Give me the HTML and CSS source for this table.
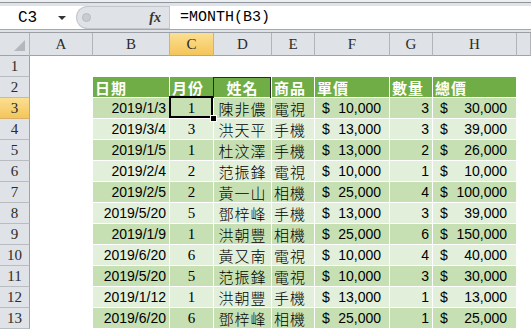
FILE: index.html
```html
<!DOCTYPE html>
<html lang="zh-Hant">
<head>
    <meta charset="UTF-8">
    <title>Sheet1</title>
    <link rel="stylesheet" href="styles.css">
</head>
<body>
    <div class="top">
        <div class="ribbon"></div>
        <div class="formula-bar">
            <div class="name-box"><span class="ref">C3</span><span class="caret"></span></div>
            <div class="fx-zone"><span class="knob"></span><span class="fx">fx</span></div>
            <div class="formula">=MONTH(B3)</div>
        </div>
        <div class="bar-gap"></div>
    </div>

    <div class="sheet">
        <!-- column headers -->
        <div class="corner"><span class="tri"></span></div>
        <div class="col-h">A</div>
        <div class="col-h">B</div>
        <div class="col-h on">C</div>
        <div class="col-h">D</div>
        <div class="col-h">E</div>
        <div class="col-h">F</div>
        <div class="col-h">G</div>
        <div class="col-h">H</div>
        <div class="col-h"></div>

        <!-- row 1 -->
        <div class="row-h">1</div>
        <div class="c"></div><div class="c"></div><div class="c"></div><div class="c"></div>
        <div class="c"></div><div class="c"></div><div class="c"></div><div class="c"></div><div class="c"></div>

        <!-- row 2 : table header -->
        <div class="row-h">2</div>
        <div class="c"></div>
        <div class="c hd">日期</div>
        <div class="c hd">月份</div>
        <div class="c hd mark">姓名</div>
        <div class="c hd">商品</div>
        <div class="c hd">單價</div>
        <div class="c hd">數量</div>
        <div class="c hd">總價</div>
        <div class="c"></div>

        <div class="row-h on">3</div>
        <div class="c"></div>
        <div class="c dk date">2019/1/3</div>
        <div class="c dk month cur">1</div>
        <div class="c dk name">陳非儂</div>
        <div class="c dk item">電視</div>
        <div class="c dk money"><span>$</span><span>10,000</span></div>
        <div class="c dk qty">3</div>
        <div class="c dk money total"><span>$</span><span>30,000</span></div>
        <div class="c"></div>

        <div class="row-h">4</div>
        <div class="c"></div>
        <div class="c lt date">2019/3/4</div>
        <div class="c lt month">3</div>
        <div class="c lt name">洪天平</div>
        <div class="c lt item">手機</div>
        <div class="c lt money"><span>$</span><span>13,000</span></div>
        <div class="c lt qty">3</div>
        <div class="c lt money total"><span>$</span><span>39,000</span></div>
        <div class="c"></div>

        <div class="row-h">5</div>
        <div class="c"></div>
        <div class="c dk date">2019/1/5</div>
        <div class="c dk month">1</div>
        <div class="c dk name">杜汶澤</div>
        <div class="c dk item">手機</div>
        <div class="c dk money"><span>$</span><span>13,000</span></div>
        <div class="c dk qty">2</div>
        <div class="c dk money total"><span>$</span><span>26,000</span></div>
        <div class="c"></div>

        <div class="row-h">6</div>
        <div class="c"></div>
        <div class="c lt date">2019/2/4</div>
        <div class="c lt month">2</div>
        <div class="c lt name">范振鋒</div>
        <div class="c lt item">電視</div>
        <div class="c lt money"><span>$</span><span>10,000</span></div>
        <div class="c lt qty">1</div>
        <div class="c lt money total"><span>$</span><span>10,000</span></div>
        <div class="c"></div>

        <div class="row-h">7</div>
        <div class="c"></div>
        <div class="c dk date">2019/2/5</div>
        <div class="c dk month">2</div>
        <div class="c dk name">黃一山</div>
        <div class="c dk item">相機</div>
        <div class="c dk money"><span>$</span><span>25,000</span></div>
        <div class="c dk qty">4</div>
        <div class="c dk money total"><span>$</span><span>100,000</span></div>
        <div class="c"></div>

        <div class="row-h">8</div>
        <div class="c"></div>
        <div class="c lt date">2019/5/20</div>
        <div class="c lt month">5</div>
        <div class="c lt name">鄧梓峰</div>
        <div class="c lt item">手機</div>
        <div class="c lt money"><span>$</span><span>13,000</span></div>
        <div class="c lt qty">3</div>
        <div class="c lt money total"><span>$</span><span>39,000</span></div>
        <div class="c"></div>

        <div class="row-h">9</div>
        <div class="c"></div>
        <div class="c dk date">2019/1/9</div>
        <div class="c dk month">1</div>
        <div class="c dk name">洪朝豐</div>
        <div class="c dk item">相機</div>
        <div class="c dk money"><span>$</span><span>25,000</span></div>
        <div class="c dk qty">6</div>
        <div class="c dk money total"><span>$</span><span>150,000</span></div>
        <div class="c"></div>

        <div class="row-h">10</div>
        <div class="c"></div>
        <div class="c lt date">2019/6/20</div>
        <div class="c lt month">6</div>
        <div class="c lt name">黃又南</div>
        <div class="c lt item">電視</div>
        <div class="c lt money"><span>$</span><span>10,000</span></div>
        <div class="c lt qty">4</div>
        <div class="c lt money total"><span>$</span><span>40,000</span></div>
        <div class="c"></div>

        <div class="row-h">11</div>
        <div class="c"></div>
        <div class="c dk date">2019/5/20</div>
        <div class="c dk month">5</div>
        <div class="c dk name">范振鋒</div>
        <div class="c dk item">電視</div>
        <div class="c dk money"><span>$</span><span>10,000</span></div>
        <div class="c dk qty">3</div>
        <div class="c dk money total"><span>$</span><span>30,000</span></div>
        <div class="c"></div>

        <div class="row-h">12</div>
        <div class="c"></div>
        <div class="c lt date">2019/1/12</div>
        <div class="c lt month">1</div>
        <div class="c lt name">洪朝豐</div>
        <div class="c lt item">手機</div>
        <div class="c lt money"><span>$</span><span>13,000</span></div>
        <div class="c lt qty">1</div>
        <div class="c lt money total"><span>$</span><span>13,000</span></div>
        <div class="c"></div>

        <div class="row-h">13</div>
        <div class="c"></div>
        <div class="c dk date">2019/6/20</div>
        <div class="c dk month">6</div>
        <div class="c dk name">鄧梓峰</div>
        <div class="c dk item">相機</div>
        <div class="c dk money"><span>$</span><span>25,000</span></div>
        <div class="c dk qty">1</div>
        <div class="c dk money total"><span>$</span><span>25,000</span></div>
        <div class="c"></div>
    </div>
</body>
</html>
```

FILE: styles.css
```css
* { box-sizing: border-box; }
body { margin: 0; background: #fff; font-family: "Liberation Sans", Arial, sans-serif; color: #000; overflow: hidden; }

/* formula bar strip */
.top { background: #dfe2e6; }
.ribbon { height: 3px; background: #eceef0; border-bottom: 1px solid #8f959c; margin-bottom: 3px; }
.formula-bar { display: flex; height: 24px; background: #fff; border-bottom: 1px solid #a3a8ae; }
.name-box { width: 76px; display: flex; align-items: center; padding-left: 18px; font-family: "Liberation Mono", monospace; font-size: 16px; }
.name-box .ref { flex: 1; }
.caret { width: 0; height: 0; border-left: 4px solid transparent; border-right: 4px solid transparent; border-top: 4px solid #333; margin-right: 10px; }
.fx-zone { width: 93px; display: flex; align-items: center; justify-content: space-between; background: #dfe2e6; border: 1px solid #c3c7cc; border-right: none; border-radius: 12px 0 0 12px; padding: 0 8px 0 5px; }
.knob { width: 9px; height: 9px; border-radius: 50%; background: #c9ccd0; border: 1px solid #b8bcc1; }
.fx { font-family: "Liberation Serif", serif; font-style: italic; font-weight: bold; font-size: 14px; color: #333; }
.formula { flex: 1; border-left: 1px solid #c3c7cc; padding-left: 10px; font-family: "Liberation Mono", monospace; font-size: 15px; line-height: 23px; }
.bar-gap { height: 3px; border-bottom: 1px solid #9aa0a6; }

/* grid */
.sheet { display: grid; grid-template-columns: 30px 63px 77px 44px 58px 43px 75px 43px 84px 1fr; grid-template-rows: 23px; grid-auto-rows: 21px; }
.corner { background: #dfe2e6; border-right: 1px solid #b1b5ba; border-bottom: 1px solid #9da3a9; display: flex; justify-content: flex-end; align-items: flex-end; padding: 0 4px 4px 0; }
.tri { width: 0; height: 0; border-left: 11px solid transparent; border-bottom: 11px solid #b4b8bd; }
.col-h { background: #dfe2e6; border-right: 1px solid #b1b5ba; border-bottom: 1px solid #9da3a9; font-family: "Liberation Serif", serif; font-size: 15px; color: #2b2b2b; text-align: center; line-height: 22px; }
.col-h.on { background: linear-gradient(#fbdf92, #f4c55a); border-bottom-color: #d9a23b; border-right-color: #d8b06a; }
.row-h { background: #dfe2e6; border-right: 1px solid #9da3a9; border-bottom: 1px solid #b9bdc2; font-family: "Liberation Serif", serif; font-size: 15px; color: #2b2b2b; text-align: center; line-height: 21px; }
.row-h.on { background: linear-gradient(#fbdf92, #f4c55a); border-right-color: #d9a23b; border-bottom-color: #d8b06a; }

/* cells */
.c { border-right: 1px solid #fff; border-bottom: 1px solid #fff; font-size: 14px; line-height: 21px; padding: 0 2px; white-space: nowrap; }
.hd { background: #70ad47; color: #fff; font-family: "Noto Sans CJK TC", sans-serif; font-weight: bold; font-size: 15px; letter-spacing: 1px; }
.hd.mark { text-align: center; position: relative; }
.hd.mark::before { content: ""; position: absolute; left: -1px; top: 0; right: 0; bottom: -1px; border: 1px solid #2a2a2a; border-bottom: none; }
.dk { background: #c6e0b4; }
.lt { background: #e2efda; }
.date { text-align: right; padding-right: 3px; }
.month { text-align: center; font-family: "Liberation Serif", serif; font-size: 15px; }
.name { text-align: center; font-family: "Noto Sans CJK TC", sans-serif; font-weight: 300; font-size: 15px; letter-spacing: 1px; }
.item { font-family: "Noto Sans CJK TC", sans-serif; font-weight: 300; font-size: 15px; letter-spacing: 1px; padding-left: 2px; }
.money { display: flex; justify-content: space-between; padding: 0 8px 0 7px; }
.money.total { padding-right: 9px; }
.qty { text-align: right; padding-right: 3px; }

/* active cell */
.cur { position: relative; }
.cur::before { content: ""; position: absolute; left: -1px; top: -2px; right: 0; bottom: 0; border: 2px solid #000; }
.cur::after { content: ""; position: absolute; right: -3px; bottom: -3px; width: 5px; height: 5px; background: #000; box-shadow: 0 0 0 1px #fff; }
```
